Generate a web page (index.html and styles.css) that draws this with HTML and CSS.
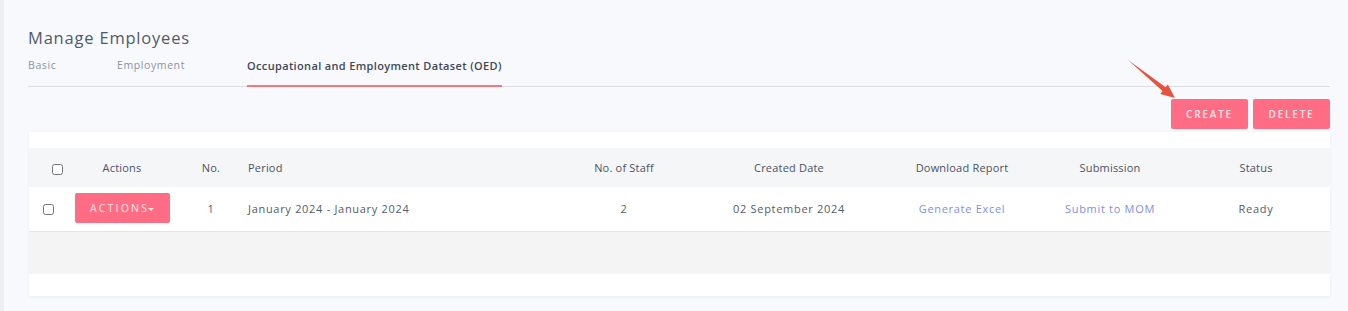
FILE: index.html
```html
<!DOCTYPE html>
<html lang="en">
<head>
    <meta charset="UTF-8">
    <meta name="viewport" content="width=device-width, initial-scale=1.0">
    <title>Manage Employees</title>
    <link rel="stylesheet" href="styles.css">
</head>
<body>

<div class="page">
    <h1 class="page-title">Manage Employees</h1>

    <div class="tabs">
        <a class="tab tab-basic">Basic</a>
        <a class="tab tab-employment">Employment</a>
        <a class="tab active">Occupational and Employment Dataset (OED)</a>
    </div>

    <div class="toolbar">
        <button class="btn-pink">CREATE</button>
        <button class="btn-pink">DELETE</button>
    </div>

    <div class="card">
        <table class="grid">
            <colgroup>
                <col style="width: 40px">
                <col style="width: 106px">
                <col style="width: 72px">
                <col style="width: 323px">
                <col style="width: 108px">
                <col style="width: 222px">
                <col style="width: 124px">
                <col style="width: 172px">
                <col>
            </colgroup>
            <thead>
                <tr>
                    <th class="head-check"><input type="checkbox"></th>
                    <th>Actions</th>
                    <th>No.</th>
                    <th class="left">Period</th>
                    <th>No. of Staff</th>
                    <th>Created Date</th>
                    <th>Download Report</th>
                    <th>Submission</th>
                    <th class="last">Status</th>
                </tr>
            </thead>
            <tbody>
                <tr class="row">
                    <td class="row-check"><input type="checkbox"></td>
                    <td><button class="btn-actions">ACTIONS<span class="caret"></span></button></td>
                    <td>1</td>
                    <td class="left">January 2024 - January 2024</td>
                    <td>2</td>
                    <td>02 September 2024</td>
                    <td><a class="link">Generate Excel</a></td>
                    <td><a class="link">Submit to MOM</a></td>
                    <td class="last">Ready</td>
                </tr>
                <tr class="row-empty">
                    <td colspan="9"></td>
                </tr>
            </tbody>
        </table>
    </div>

    <!-- annotation arrow pointing at CREATE -->
    <svg class="arrow" width="60" height="50" viewBox="0 0 60 50">
        <polygon points="8,5 45.7,32.3 47.9,29.5 55,43 40.3,38.9 42.5,36.1" fill="#e5533d"/>
    </svg>
</div>

</body>
</html>
```

FILE: styles.css
```css
/* page base */
body {
    margin: 0;
    background-color: #f8f9fd;
    font-family: "Open Sans", Arial, sans-serif;
    color: #4e5868;
}

.page {
    position: relative;
    min-height: 311px;
    border-left: 4px solid #eceef3;
    padding: 27px 18px 0 24px;
    box-sizing: border-box;
}

.page-title {
    font-size: 16.5px;
    font-weight: 400;
    color: #4f5b6b;
    margin: 0;
    line-height: 22px;
    letter-spacing: 0.8px;
}

.tabs {
    display: flex;
    border-bottom: 1px solid #dcdde0;
    margin-top: 10px;
}

.tab {
    font-size: 10.5px;
    color: #8a93a3;
    padding-bottom: 13px;
    letter-spacing: 0.6px;
    line-height: 13px;
    border-bottom: 2px solid transparent;
    margin-bottom: -1px;
}

.tab-basic { width: 89px; }
.tab-employment { width: 130px; }

.tab.active {
    color: #3f4857;
    font-weight: 600;
    font-size: 11px;
    letter-spacing: 0.35px;
    border-bottom-color: #f37a78;
}

.toolbar {
    display: flex;
    justify-content: flex-end;
    gap: 5px;
    margin-top: 12px;
}

.btn-pink {
    background-color: #ff6d84;
    color: #fde6ea;
    border: none;
    border-radius: 2px;
    width: 77px;
    height: 30px;
    font-family: inherit;
    font-size: 10px;
    font-weight: 600;
    letter-spacing: 1.8px;
    padding: 0;
}

.card {
    background-color: #ffffff;
    margin-top: 3px;
    margin-left: 1px;
    padding-top: 16px;
    padding-bottom: 22px;
    box-shadow: 0 1px 3px rgba(0, 0, 0, 0.06);
}

.grid {
    width: 100%;
    border-collapse: collapse;
    table-layout: fixed;
    font-size: 11px;
    letter-spacing: 0.2px;
}

.grid th {
    background-color: #f5f6f8;
    font-weight: 400;
    color: #4a5363;
    height: 39px;
    padding: 0;
    text-align: center;
}

.grid td {
    height: 42px;
    padding: 0 0 2px;
    text-align: center;
    color: #555d69;
    letter-spacing: 0.7px;
}

.grid .left {
    text-align: left;
    padding-left: 1px;
}

.grid .last {
    padding-right: 14px;
}

.head-check {
    text-align: left !important;
    padding-left: 23px !important;
}

.row-check {
    text-align: left !important;
    padding-left: 14px !important;
}

input[type="checkbox"] {
    width: 11px;
    height: 11px;
    margin: 0;
    vertical-align: middle;
    accent-color: #888;
}

.row td {
    border-bottom: 1px solid #e4e5e8;
}

.btn-actions {
    background-color: #ff6d84;
    color: #fde6ea;
    border: none;
    border-radius: 2px;
    width: 95px;
    height: 30px;
    font-family: inherit;
    font-size: 10.5px;
    letter-spacing: 2.2px;
    padding: 0;
}

.caret {
    display: inline-block;
    border-left: 3px solid transparent;
    border-right: 3px solid transparent;
    border-top: 3px solid #fde6ea;
    vertical-align: middle;
    margin-left: -1px;
}

.link {
    color: #7f8fde;
}

.row-empty td {
    height: 42px;
    padding: 0;
    background-color: #f4f4f4;
}

.arrow {
    position: absolute;
    left: 1116px;
    top: 55px;
}
```
